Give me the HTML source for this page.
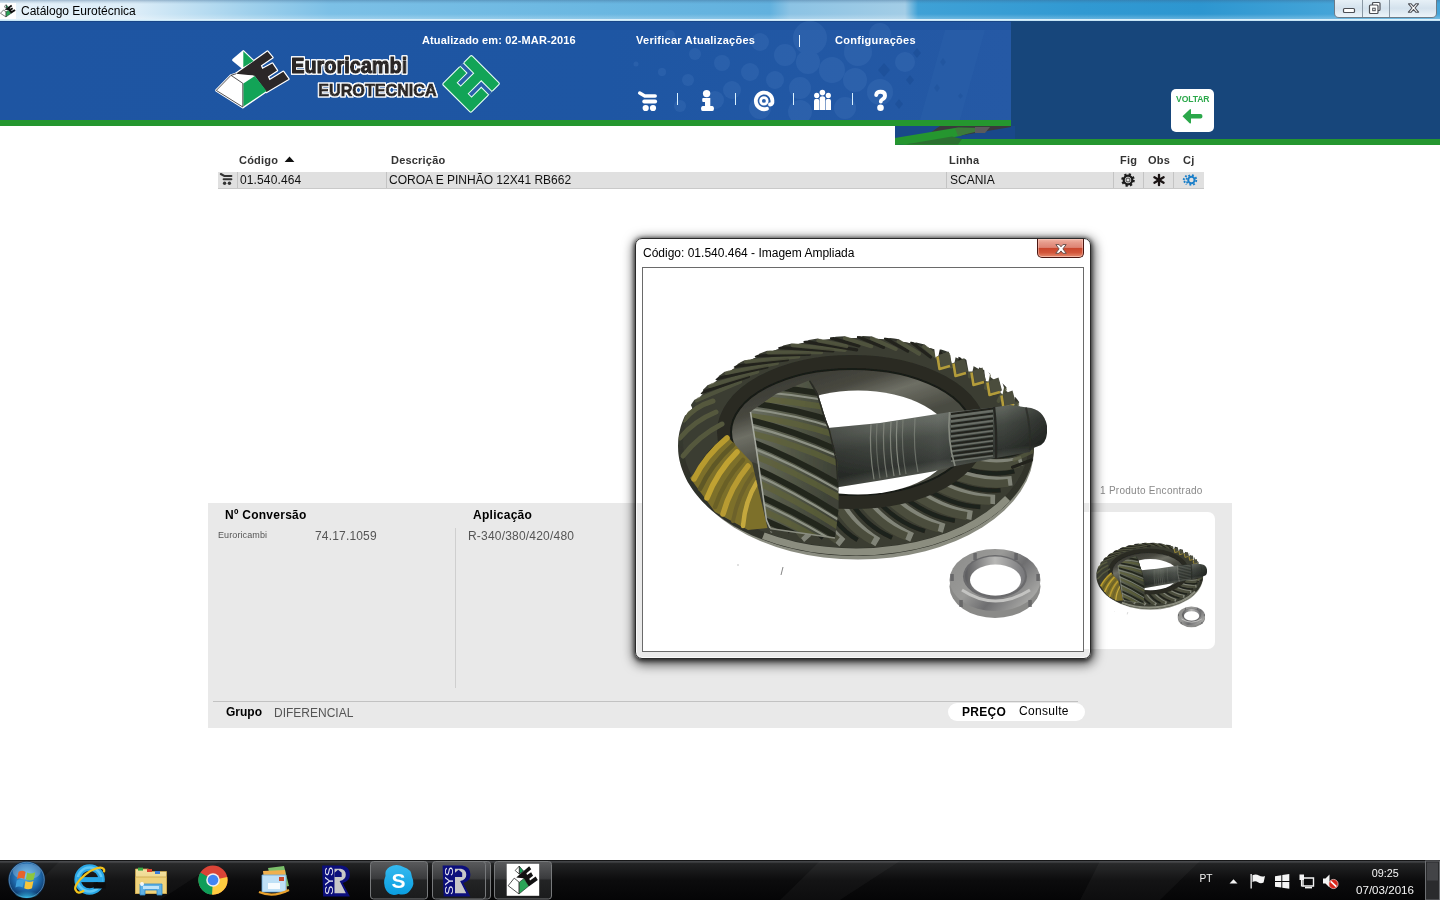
<!DOCTYPE html>
<html lang="pt-BR">
<head>
<meta charset="utf-8">
<title>Catálogo Eurotécnica</title>
<style>
*{box-sizing:border-box;margin:0;padding:0}
html,body{width:1440px;height:900px;overflow:hidden;background:#fff}
body{position:relative;font-family:"Liberation Sans",Arial,sans-serif;font-size:12px;color:#000}
.abs{position:absolute}
svg{will-change:transform}
.t{position:absolute;white-space:nowrap;line-height:1;will-change:transform}
/* title bar */
#titlebar{left:0;top:0;width:1440px;height:21px;background:linear-gradient(180deg,rgba(60,100,140,.4) 0,rgba(60,100,140,.15) 2px,rgba(255,255,255,0) 4px,rgba(255,255,255,0) 14px,rgba(255,255,255,.25) 19px),linear-gradient(90deg,#e6f2fa 0,#dcedf8 135px,#9fd0ec 250px,#7cc0e6 330px,#6ab7e1 600px,#62b1de 770px,#8cc3e4 790px,#a3cde6 905px,#3fa1d6 918px,#3199d2 1080px,#2d96d0 1200px,#44a4d8 1330px,#44a4d8 1440px)}
#titlebar .line{left:0;top:19px;width:1440px;height:2px;background:linear-gradient(#e9f6fd,#b9dff3)}
#title{left:21px;top:5px;font-size:12px;color:#000;font-family:"Liberation Sans","DejaVu Sans",sans-serif}
/* header */
#hdrL{left:0;top:21px;width:1011px;height:99px;background:#1f56a3;overflow:hidden}
#grnL{left:0;top:120px;width:1011px;height:6px;background:#25962f}
#hdrR{left:1011px;top:21px;width:429px;height:118px;background:#17467b}
#hdrR2{left:895px;top:126px;width:116px;height:13px;background:#17467b}
#grnR{left:895px;top:139px;width:545px;height:6px;background:#25962f}
.nav{color:#fff;font-weight:bold;font-size:11px;letter-spacing:.13px}
.sep{background:#fff;width:1px}
/* table */
.th{font-weight:bold;font-size:11px;color:#333;letter-spacing:.2px}
#row{left:218px;top:172px;width:986px;height:17px;background:#e0e0e0;border-bottom:1px solid #c9c9c9}
.td{font-size:12px;color:#111;letter-spacing:.12px}
.cs{background:#c4c4c4;width:1px;top:172px;height:16px}
/* panel */
#panel{left:208px;top:503px;width:1024px;height:225px;background:#e9e9e9}
#thumb{left:1060px;top:512px;width:155px;height:137px;background:#fff;border-radius:7px}
/* dialog */
#dlg{left:635px;top:238px;width:456px;height:421px;background:rgba(255,255,255,.06);border:1px solid #2a2a2a;border-radius:7px;box-shadow:0 0 0 1px rgba(255,255,255,.7) inset,0 1px 4px 1px rgba(0,0,0,.65),1px 3px 11px 3px rgba(0,0,0,.6)}
#dlgin{left:642px;top:267px;width:442px;height:385px;background:#fff;border:1px solid #6a6a6a}
#dtitle{left:643px;top:247px;font-size:12px;color:#000}
#close{left:1037px;top:239px;width:47px;height:19px;border:1px solid #4a1712;border-top:none;border-radius:0 0 5px 5px;background:linear-gradient(#f2b5a6 0,#e69a8a 20%,#dd8373 47%,#c9452c 50%,#d2553a 75%,#df7a5e 92%,#f1b09c 100%);box-shadow:inset 0 0 0 1px rgba(255,210,200,.45)}
/* taskbar */
#taskbar{left:0;top:860px;width:1440px;height:40px;background:#0c0c0d}
</style>
</head>
<body>
<div id="titlebar" class="abs"><div class="abs line"></div></div>

<svg class="abs" style="left:0;top:0" width="1440" height="22" viewBox="0 0 1440 22">
<defs><linearGradient id="wb" x1="0" y1="0" x2="0" y2="1"><stop offset="0" stop-color="#e9f2f8"/><stop offset="0.5" stop-color="#d4e2ed"/><stop offset="1" stop-color="#eef5fa"/></linearGradient>
<linearGradient id="tfade" x1="0" y1="0" x2="1" y2="0"><stop offset="0" stop-color="#fff" stop-opacity="0.85"/><stop offset="0.5" stop-color="#fff" stop-opacity="0.55"/><stop offset="1" stop-color="#fff" stop-opacity="0"/></linearGradient></defs>


<rect x="0" y="3" width="16" height="16" fill="#fff"/>
<g transform="translate(-45 -6.4) scale(0.21 0.218)"><path d="M243.3 51.3 L253.500 61 L243.300 67.300 Z" fill="#12a457" stroke="#111" stroke-width="2"/><path d="M233.300 60 L243.300 51.300 L243.300 67 Z" fill="#fff" stroke="#111" stroke-width="2"/><path d="M236 73.800 L267.500 51.500 L272.500 57.500 L260.800 65.500 L262.300 69 L272.300 63.500 L277 70.500 L267.800 76.500 L269.500 80.200 L283.300 71.800 L288.500 79 L266.500 92 L254.500 75.800 L253 75.600 Z" fill="#111"/><path d="M216.300 90.400 L231 75.300 L242.800 83.300 L242.800 107 Z" fill="#fff" stroke="#111" stroke-width="2.500"/><path d="M243.400 83.500 L254.800 76 L266.500 91 L243.400 106.500 Z" fill="#2aa457" stroke="#111" stroke-width="2"/></g>
<path d="M1334.500 -1 V13 Q1334.500 17.500 1339 17.500 H1432 Q1436.500 17.500 1436.500 13 V-1 Z" fill="url(#wb)" stroke="#6b7b88" stroke-width="1"/>
<path d="M1362.500 0 V17 M1389.500 0 V17" stroke="#8a98a4" stroke-width="1"/>
<rect x="1343.500" y="8.500" width="11" height="4" rx="1" fill="#fff" stroke="#4c4f55" stroke-width="1.200"/>
<rect x="1372.500" y="2.500" width="7.500" height="8" rx="1" fill="#fff" stroke="#4c4f55" stroke-width="1.200"/>
<rect x="1369.500" y="5" width="8.500" height="8.500" rx="1" fill="#fff" stroke="#4c4f55" stroke-width="1.200"/>
<rect x="1372.700" y="8.200" width="2.500" height="2.500" fill="#fff" stroke="#4c4f55" stroke-width="1"/>
<path d="M1408.500 3.800 L1411.200 3.800 L1413.500 6.500 L1415.800 3.800 L1418.500 3.800 L1415 8 L1418.600 12.200 L1415.800 12.200 L1413.500 9.500 L1411.200 12.200 L1408.400 12.200 L1412 8 Z" fill="#fff" stroke="#4c4f55" stroke-width="1.100" stroke-linejoin="round"/>
</svg>
<div id="title" class="t">Catálogo Eurotécnica</div>

<div id="hdrL" class="abs"></div>
<svg class="abs" style="left:0;top:21px" width="1011" height="99" viewBox="0 21 1011 99">
<defs><linearGradient id="hg" x1="0" x2="1" y1="0" y2="0"><stop offset="0" stop-color="#1e55a2"/><stop offset="0.6" stop-color="#1e56a3"/><stop offset="1" stop-color="#2559a5"/></linearGradient></defs>
<rect x="0" y="21" width="1011" height="99" fill="url(#hg)"/>
<rect x="0" y="21" width="1011" height="1" fill="#163f7c" opacity="0.7"/>
<rect x="0" y="22" width="1011" height="8" fill="#1c4f98" opacity="0.4"/>
<g fill="#4a7cc0" opacity="0.25">
<circle cx="810" cy="38" r="17"/><circle cx="785" cy="55" r="11"/><circle cx="760" cy="42" r="9"/><circle cx="808" cy="62" r="12"/><circle cx="832" cy="70" r="13"/><circle cx="858" cy="52" r="14"/><circle cx="880" cy="34" r="11"/><circle cx="750" cy="72" r="9"/><circle cx="775" cy="80" r="9"/><circle cx="800" cy="88" r="11"/><circle cx="855" cy="80" r="12"/><circle cx="880" cy="92" r="13"/><circle cx="722" cy="63" r="8"/><circle cx="695" cy="54" r="6"/><circle cx="732" cy="90" r="9"/><circle cx="688" cy="80" r="6"/><circle cx="662" cy="72" r="4"/><circle cx="636" cy="64" r="2.5"/><circle cx="715" cy="100" r="9"/><circle cx="760" cy="108" r="11"/><circle cx="800" cy="112" r="12"/><circle cx="845" cy="108" r="11"/><circle cx="680" cy="106" r="6"/><circle cx="905" cy="62" r="10"/><circle cx="670" cy="35" r="5"/></g>
<g fill="#1a4c94" opacity="0.55"><path d="M878 70l6 -7 6 7 -6 7z"/><path d="M906 80l4 -5 4 5 -4 5z"/><path d="M913 53l4 -5 4 5 -4 5z"/><path d="M934 88l3 -4 3 4 -3 4z"/><path d="M895 104l4 -5 4 5 -4 5z"/><path d="M940 62l3 -4 3 4 -3 4z"/><path d="M958 96l2.5 -3 2.5 3 -2.5 3z"/></g>
<path d="M945 30 L985 30 L960 120 L920 120 Z" fill="#3166b0" opacity="0.25"/>
</svg>
<div id="grnL" class="abs"></div>
<div id="hdrR" class="abs"></div>
<div id="hdrR2" class="abs"></div>
<div id="grnR" class="abs"></div>
<svg class="abs" style="left:895px;top:126px" width="120" height="19" viewBox="895 126 120 19">
<rect x="895" y="126" width="120" height="19" fill="#19488a"/>
<path d="M940 126 L1011 126 L1011 127 L958 136 L930 133 Z" fill="#3a3a3c"/>
<path d="M895 138 L958 127.5 L982 128 L960 136 L920 143 L895 145 Z" fill="#25962f"/>
<path d="M955 128 L982 128 L975 132 L958 136 Z" fill="#3d7a3a"/>
<path d="M975 127 L990 127 L985 133 L975 133 Z" fill="#5a5a5c"/>
<path d="M895 145 L960 139 L1015 139 L1015 145 Z" fill="#25962f"/>
<path d="M905 144.5 L952 136.5 L962 139 L958 144.5 Z" fill="#2c6f31"/>
</svg>


<svg class="abs" style="left:205px;top:44px" width="310" height="76" viewBox="205 44 310 76">
<g stroke="#fff" stroke-width="2.4" stroke-linejoin="round" fill="#fff">
<path d="M233.3 60 L243.3 51.3 L253 60.5 L242.5 67.5 Z"/>
<path d="M236 73.8 L267.5 51.5 L272.5 57.5 L260.8 65.5 L262.3 69 L272.3 63.5 L277 70.5 L267.8 76.5 L269.5 80.2 L283.3 71.8 L288.5 79 L266.5 92 L254.500 75.800 L253 75.600 Z"/>
<path d="M216.3 90.400 L231 75.300 L236 73.800 L254.800 76 L266.500 91 L242.800 107.300 Z"/>
</g>
<path d="M233.3 60 L243.3 51.3 L243.3 67 Z" fill="#fff"/>
<path d="M243.3 51.3 L253.5 61 L243.3 67.3 Z" fill="#12a457"/>
<path d="M236 73.8 L267.5 51.5 L272.5 57.5 L260.8 65.5 L262.3 69 L272.3 63.5 L277 70.5 L267.8 76.5 L269.5 80.2 L283.3 71.8 L288.5 79 L266.5 92 L254.5 75.8 L253 75.6 Z" fill="#2b2728"/>
<path d="M216.3 90.4 L231 75.3 L242.8 83.3 L242.8 107 Z" fill="#fff"/>
<path d="M234.5 75.6 L253.3 75.6 L243.3 82.5 Z" fill="#fff"/>
<path d="M243.4 83.5 L254.8 76 L266.5 91 L243.4 106.5 Z" fill="#12a457"/>
<path d="M216.3 90.4 L231 75.3 L242.8 83.3 L242.8 107 Z M231 75.3 L236 73.8" fill="none" stroke="#2b2728" stroke-width="0.8"/>
<defs><filter id="wout" x="-5%" y="-20%" width="110%" height="140%"><feMorphology in="SourceAlpha" operator="dilate" radius="1.15" result="d"/><feGaussianBlur in="d" stdDeviation="0.45" result="b"/><feFlood flood-color="#fff" flood-opacity="0.97"/><feComposite in2="b" operator="in" result="o"/><feMerge><feMergeNode in="o"/><feMergeNode in="o"/><feMergeNode in="SourceGraphic"/></feMerge></filter></defs>
<g font-family="'Liberation Sans',sans-serif" font-weight="bold" stroke-linejoin="round" filter="url(#wout)">
<text x="291.2" y="73.4" font-size="22.3" textLength="116" lengthAdjust="spacingAndGlyphs" fill="#2b2728" stroke="#2b2728" stroke-width="1.35">Euroricambi</text>
<text x="318.3" y="95.7" font-size="16.4" textLength="118.3" lengthAdjust="spacingAndGlyphs" fill="#2b2728" stroke="#2b2728" stroke-width="1">EUROTECNICA</text>
</g>
<g transform="translate(442.5 84.2) rotate(-45)">
<!-- local: x = v (up-right), y = u (down-right) -->
<rect x="-0.2" y="-0.2" width="41.2" height="40.4" rx="1.5" fill="#12a457" stroke="#e8fff4" stroke-width="1.1"/>
<path d="M25.2 -0.8 L29.8 -0.8 L29.8 14.2 L11.5 14.2 L11.5 9.4 L25.2 9.4 Z" fill="#2a5faa" stroke="#e8fff4" stroke-width="1"/>
<path d="M25.2 40.8 L29.8 40.8 L29.8 25 L11.5 25 L11.5 29.6 L25.2 29.6 Z" fill="#2a5faa" stroke="#e8fff4" stroke-width="1"/>
<rect x="24.6" y="-2" width="5.8" height="1.8" fill="#1e55a2"/>
<rect x="24.6" y="40.3" width="5.8" height="1.8" fill="#1e55a2"/>
</g>
</svg>
<div class="t nav" style="left:422px;top:35px">Atualizado em: 02-MAR-2016</div>
<div class="t nav" style="left:636px;top:35px;letter-spacing:.27px">Verificar Atualizações</div>
<div class="t nav" style="left:835px;top:35px;letter-spacing:.3px">Configurações</div>


<svg class="abs" style="left:630px;top:30px" width="270" height="90" viewBox="630 30 270 90">
<g fill="#fff" stroke="none">
<rect x="799" y="35" width="1" height="12" fill="#e6f4ff"/>
<rect x="677" y="93" width="1" height="12" fill="#d8f0ff"/><rect x="735" y="93" width="1" height="12" fill="#d8f0ff"/><rect x="793" y="93" width="1" height="12" fill="#d8f0ff"/><rect x="852" y="93" width="1" height="12" fill="#d8f0ff"/>
<!-- cart -->
<path d="M639.7 93 L644.8 95.900 L655.200 95.900" fill="none" stroke="#fff" stroke-width="3.5" stroke-linecap="round" stroke-linejoin="round"/>
<path d="M644.2 101.500 L655.200 101.500" fill="none" stroke="#fff" stroke-width="3.8" stroke-linecap="round"/>
<circle cx="645.7" cy="108" r="3.1"/><circle cx="653" cy="108" r="3.1"/>
<!-- info -->
<circle cx="706.6" cy="93.6" r="3.7"/>
<path d="M702.6 97.9 H710.3 V106 H712.4 Q714 106 714 108.5 Q714 111 712.4 111 H702.6 Q701 111 701 108.5 Q701 106 702.6 106 H705 V102 H702.6 Q701.6 100 702.6 97.9 Z"/>
<!-- at -->
<path d="M767 108.700 A8.3 8.3 0 1 1 772.4 100.600 Q772.800 104.300 770 104.500" fill="none" stroke="#fff" stroke-width="3.8" stroke-linecap="round"/>
<circle cx="763.9" cy="100.9" r="3.3" fill="none" stroke="#fff" stroke-width="2.7"/>
<!-- people -->
<circle cx="816.7" cy="95.4" r="2.6"/><circle cx="822.4" cy="92.6" r="2.8"/><circle cx="828.3" cy="95.4" r="2.6"/>
<path d="M814 110 V100.8 Q814 98.8 816.7 98.8 Q819.3 98.8 819.3 100.8 V110 Z"/>
<path d="M819.7 110 V98.2 Q819.7 96.2 822.4 96.2 Q825.2 96.2 825.2 98.2 V110 Z"/>
<path d="M825.7 110 V100.8 Q825.7 98.8 828.3 98.8 Q831 98.8 831 100.8 V110 Z"/>
<!-- question -->
<path d="M876.2 95 Q876.6 91.8 880.6 91.8 Q885 91.8 885 95.6 Q885 98 882.4 99.4 Q880.8 100.4 880.8 101.6" fill="none" stroke="#fff" stroke-width="3.9" stroke-linecap="round"/>
<circle cx="880.5" cy="107.7" r="3.3"/>
</g></svg>

<div class="abs" style="left:1171px;top:89px;width:43px;height:43px;background:#fff;border-radius:5px"></div>
<div class="t" style="left:1175.5px;top:95px;font-size:8.6px;font-weight:bold;color:#2ba84a;letter-spacing:-.1px">VOLTAR</div>
<svg class="abs" style="left:1171px;top:89px" width="43" height="43" viewBox="0 0 43 43"><path d="M11.5 27.3 L18.6 20.4 Q20 19.6 20 21 V25 H29.5 Q31.5 25 31.5 27.3 Q31.5 29.6 29.5 29.6 H20 V33.4 Q20 35 18.6 34.2 Z" fill="#2ba84a"/></svg>
<div class="t th" style="left:239px;top:155px">Código</div>
<div class="t th" style="left:391px;top:155px">Descrição</div>
<div class="t th" style="left:949px;top:155px">Linha</div>
<div class="t th" style="left:1120px;top:155px">Fig</div>
<div class="t th" style="left:1148px;top:155px">Obs</div>
<div class="t th" style="left:1183px;top:155px">Cj</div>
<div id="row" class="abs"></div>
<div class="abs cs" style="left:237px"></div><div class="abs cs" style="left:386px"></div><div class="abs cs" style="left:946px"></div><div class="abs cs" style="left:1113px"></div><div class="abs cs" style="left:1143px"></div><div class="abs cs" style="left:1173px"></div>
<svg class="abs" style="left:218px;top:150px" width="990" height="40" viewBox="218 150 990 40">
<path d="M284.6 162 L289.5 156.6 L294.4 162 Z" fill="#111"/>
<g stroke="#333" fill="none" stroke-width="2" stroke-linecap="round"><path d="M220.8 174 L224.3 175.9 L231.4 175.9"/><path d="M223.6 179.3 L231.4 179.3"/></g>
<circle cx="224.6" cy="183.3" r="1.7" fill="#333"/><circle cx="229.4" cy="183.3" r="1.7" fill="#333"/>
<!-- gear -->
<g transform="translate(1128 180)"><circle r="4.3" fill="none" stroke="#1c1c1c" stroke-width="2.2"/><circle r="5.6" fill="none" stroke="#1c1c1c" stroke-width="2.4" stroke-dasharray="2.2 2.2"/><circle r="2" fill="none" stroke="#1c1c1c" stroke-width="0.8"/></g>
<!-- asterisk -->
<g transform="translate(1159 180)" stroke="#1a1414" stroke-width="2.3" stroke-linecap="round"><path d="M0 -5.2V5.2"/><path d="M-4.6 -2.7L4.6 2.7"/><path d="M-4.6 2.7L4.6 -2.7"/></g>
<!-- blue gears -->
<g fill="none" stroke="#1b7fc9"><circle cx="1191.4" cy="180" r="3.2" stroke-width="2"/><circle cx="1191.4" cy="180" r="4.9" stroke-width="1.8" stroke-dasharray="1.9 1.95"/><path d="M1186.5 175.5 L1183.2 180 L1186.5 184.5" stroke-width="1.9" stroke-dasharray="1.9 1.6"/></g>
</svg>
<div class="t td" style="left:240px;top:174px">01.540.464</div>
<div class="t td" style="left:389px;top:174px;letter-spacing:0">COROA E PINHÃO 12X41 RB662</div>
<div class="t td" style="left:950px;top:174px;letter-spacing:0">SCANIA</div>

<div id="panel" class="abs"></div>
<div id="thumb" class="abs"></div>
<div class="abs" style="left:455px;top:528px;width:1px;height:160px;background:#cfcfcf"></div>
<div class="abs" style="left:213px;top:701px;width:865px;height:1px;background:#c2c2c2"></div>
<div class="abs" style="left:948px;top:703px;width:137px;height:18px;background:#fff;border-radius:9px"></div>
<div class="t" style="left:962px;top:706px;font-size:12px;font-weight:bold;letter-spacing:.3px">PREÇO</div>
<div class="t" style="left:1019px;top:705px;font-size:12px;letter-spacing:.3px">Consulte</div>
<div class="t" style="left:225px;top:509px;font-weight:bold;font-size:12px;letter-spacing:.27px">Nº Conversão</div>
<div class="t" style="left:473px;top:509px;font-weight:bold;font-size:12px;letter-spacing:.27px">Aplicação</div>
<div class="t" style="left:218px;top:531px;font-size:9px;color:#555;letter-spacing:.1px">Euroricambi</div>
<div class="t" style="left:315px;top:530px;font-size:12px;color:#555;letter-spacing:.17px">74.17.1059</div>
<div class="t" style="left:468px;top:530px;font-size:12px;color:#555;letter-spacing:.2px">R-340/380/420/480</div>
<div class="t" style="left:226px;top:706px;font-weight:bold;font-size:12px">Grupo</div>
<div class="t" style="left:274px;top:707px;font-size:12px;color:#555">DIFERENCIAL</div>
<div class="t" style="left:1100px;top:485.5px;font-size:10px;color:#888;letter-spacing:.27px">1 Produto Encontrado</div>

<div id="dlg" class="abs"></div>
<div id="dlgin" class="abs"></div>
<div id="dtitle" class="t">Código: 01.540.464 - Imagem Ampliada</div>
<div id="close" class="abs"></div>
<svg class="abs" style="left:1054px;top:242.500px" width="14" height="12" viewBox="0 0 14 12"><path d="M1.8 1.600 L5.2 1.600 L7 3.800 L8.800 1.600 L12.200 1.600 L8.900 5.900 L12.300 10.300 L8.900 10.300 L7 7.900 L5.100 10.300 L1.700 10.300 L5.100 5.900 Z" fill="#fff" stroke="#6a504c" stroke-width="1" stroke-linejoin="round"/></svg>
<svg class="abs" style="left:643px;top:268px" width="440" height="383" viewBox="643 268 440 383"><g id="gearimg">
<defs>
<linearGradient id="gRing" x1="0" y1="0" x2="1" y2="1"><stop offset="0" stop-color="#45483a"/><stop offset="0.35" stop-color="#2e3029"/><stop offset="1" stop-color="#33352c"/></linearGradient>
<linearGradient id="gShaft" gradientUnits="userSpaceOnUse" x1="930" y1="412" x2="940" y2="472"><stop offset="0" stop-color="#666b64"/><stop offset="0.15" stop-color="#5d625b"/><stop offset="0.4" stop-color="#434842"/><stop offset="0.8" stop-color="#2f332f"/><stop offset="1" stop-color="#50544c"/></linearGradient>
<linearGradient id="gShaftL" gradientUnits="userSpaceOnUse" x1="830" y1="0" x2="1047" y2="0"><stop offset="0" stop-color="#000" stop-opacity="0.25"/><stop offset="0.25" stop-color="#000" stop-opacity="0"/><stop offset="0.5" stop-color="#fff" stop-opacity="0.06"/><stop offset="0.8" stop-color="#000" stop-opacity="0.0"/><stop offset="1" stop-color="#000" stop-opacity="0.3"/></linearGradient>
<linearGradient id="gPin" x1="0" y1="0" x2="1" y2="0.2"><stop offset="0" stop-color="#6c7064"/><stop offset="0.5" stop-color="#555948"/><stop offset="1" stop-color="#3f4337"/></linearGradient>
<linearGradient id="gNut" x1="0" y1="0" x2="1" y2="0.6"><stop offset="0" stop-color="#8a8a88"/><stop offset="0.45" stop-color="#9a9a98"/><stop offset="0.7" stop-color="#6e6e70"/><stop offset="1" stop-color="#a4a4a2"/></linearGradient>
<linearGradient id="gNutIn" x1="0" y1="0" x2="1" y2="0"><stop offset="0" stop-color="#5c5c5e"/><stop offset="0.5" stop-color="#b8b8b6"/><stop offset="1" stop-color="#77777a"/></linearGradient>
<linearGradient id="gBore" x1="0" y1="0" x2="0.6" y2="1"><stop offset="0" stop-color="#2f302a"/><stop offset="0.3" stop-color="#47473f"/><stop offset="0.42" stop-color="#6e6f65"/><stop offset="0.6" stop-color="#4a4b42"/><stop offset="1" stop-color="#4a4b42"/></linearGradient>
<clipPath id="cOut"><ellipse cx="856" cy="448" rx="178" ry="112"/></clipPath>
<clipPath id="cPin"><path d="M750,412 L776,394 L810,380 L814,386 L818,394 L826,420 L830,430 L837,460 L838.5,482 L838.5,510 L835,538 L770,528.5 L766,520 L756,450 Z"/></clipPath>
<filter id="soft" x="-5%" y="-5%" width="110%" height="110%"><feGaussianBlur stdDeviation="0.55"/></filter>
<filter id="soft2" x="-5%" y="-5%" width="110%" height="110%"><feGaussianBlur stdDeviation="1.6"/></filter>
</defs>
<g filter="url(#soft)">
<ellipse cx="858" cy="449.5" rx="176" ry="110" fill="#8a8c80"/>
<polygon fill="url(#gRing)" points="1034.0,446.0 1033.9,448.8 1033.8,451.6 1033.5,454.4 1033.1,457.2 1032.6,460.0 1031.9,462.8 1031.2,465.6 1030.3,468.3 1029.3,471.1 1028.2,473.8 1027.0,476.5 1025.7,479.2 1024.3,481.9 1022.7,484.5 1021.1,487.1 1019.3,489.7 1017.5,492.3 1015.5,494.8 1013.4,497.3 1011.3,499.8 1009.0,502.2 1006.6,504.6 1004.2,507.0 1001.6,509.3 998.9,511.6 996.2,513.8 993.3,516.0 990.4,518.1 987.4,520.2 984.3,522.3 981.1,524.3 977.8,526.2 974.4,528.1 971.0,530.0 967.5,531.8 963.9,533.5 960.3,535.2 956.5,536.8 952.8,538.3 948.9,539.8 945.0,541.3 941.0,542.6 937.0,543.9 932.9,545.2 928.8,546.4 924.6,547.5 920.4,548.5 916.2,549.5 911.9,550.4 907.5,551.3 903.2,552.1 898.8,552.8 894.3,553.4 889.9,554.0 885.4,554.5 880.9,554.9 876.4,555.3 871.9,555.6 867.4,555.8 862.8,555.9 858.3,556.0 853.7,556.0 849.2,555.9 844.6,555.8 840.1,555.6 835.6,555.3 831.1,554.9 826.6,554.5 822.1,554.0 817.7,553.4 813.2,552.8 808.8,552.1 804.5,551.3 800.1,550.4 795.8,549.5 791.6,548.5 787.4,547.5 783.2,546.4 779.1,545.2 775.0,543.9 771.0,542.6 767.0,541.3 763.1,539.8 759.2,538.3 755.5,536.8 751.7,535.2 748.1,533.5 744.5,531.8 741.0,530.0 737.6,528.1 734.2,526.2 730.9,524.3 727.7,522.3 724.6,520.2 721.6,518.1 718.7,516.0 715.8,513.8 713.1,511.6 710.4,509.3 707.8,507.0 705.4,504.6 703.0,502.2 700.7,499.8 698.6,497.3 696.5,494.8 694.5,492.3 692.7,489.7 690.9,487.1 689.3,484.5 687.7,481.9 686.3,479.2 685.0,476.5 683.8,473.8 682.7,471.1 681.7,468.3 680.8,465.6 680.1,462.8 679.4,460.0 678.9,457.2 678.5,454.4 678.2,451.6 678.1,448.8 678.0,446.0 678.1,443.2 678.2,440.4 678.5,437.6 678.9,434.8 679.4,432.0 680.1,429.2 680.8,426.4 681.7,423.7 682.7,420.9 683.8,418.2 685.0,415.5 689.4,413.4 690.8,410.8 692.3,408.2 690.9,404.9 692.7,402.3 694.5,399.7 699.4,398.1 701.4,395.6 703.5,393.2 703.0,389.8 705.4,387.4 707.8,385.0 713.0,383.9 715.6,381.6 718.4,379.4 718.7,376.0 721.6,373.9 724.6,371.8 730.1,371.1 733.2,369.1 736.4,367.2 737.6,363.9 741.0,362.0 744.5,360.2 750.0,360.1 753.6,358.4 757.3,356.9 759.2,353.7 763.1,352.2 767.0,350.7 772.5,351.1 776.4,349.8 780.4,348.6 783.2,345.6 787.4,344.5 791.6,343.5 796.9,344.3 801.1,343.4 805.4,342.6 808.8,339.9 813.2,339.2 817.7,338.6 822.7,340.0 827.1,339.5 831.5,339.0 835.6,336.7 840.1,336.4 844.6,336.2 849.3,338.1 853.8,338.0 858.2,338.0 862.8,336.1 867.4,336.2 871.9,336.4 876.0,338.7 880.5,339.0 884.9,339.5 889.9,338.0 894.3,338.6 898.8,339.2 902.3,341.8 906.6,342.6 910.9,343.4 916.2,342.5 920.4,343.5 924.6,344.5 927.5,347.4 931.6,348.6 935.6,349.8 941.0,349.4 945.0,350.7 948.9,352.2 949.4,356.9 953.0,358.4 956.6,360.0 963.9,358.5 967.5,360.2 971.0,362.0 970.3,366.8 973.5,368.6 976.7,370.5 984.3,369.7 987.4,371.8 990.4,373.9 988.5,378.5 991.3,380.6 993.9,382.7 1001.6,382.7 1004.2,385.0 1006.6,387.4 1003.6,391.8 1005.8,394.1 1007.9,396.5 1015.5,397.2 1017.5,399.7 1019.3,402.3 1015.3,406.3 1016.9,408.8 1018.4,411.4 1025.7,412.8 1027.0,415.5 1028.2,418.2 1029.3,420.9 1030.3,423.7 1031.2,426.4 1031.9,429.2 1032.6,432.0 1033.1,434.8 1033.5,437.6 1033.8,440.4 1033.9,443.2"/>
<g clip-path="url(#cOut)">
<ellipse cx="856" cy="443" rx="173" ry="105" fill="#3b3d32"/>
<path d="M971.6,447.0 Q1004.8,450.1 1024.9,439.5" stroke="#8a8c80" stroke-width="9.5" fill="none" opacity="0.9"/>
<path d="M970.6,449.0 Q1004.1,452.8 1023.0,442.7" stroke="#4c4e3c" stroke-width="8" fill="none"/>
<path d="M967.3,454.4 Q1001.4,460.3 1021.3,451.3" stroke="#1f201a" stroke-width="4.5" fill="none"/>
<path d="M962.9,459.7 Q997.5,467.8 1022.1,460.6" stroke="#8a8c80" stroke-width="9.5" fill="none" opacity="0.9"/>
<path d="M961.2,461.5 Q995.8,470.3 1019.1,463.3" stroke="#4c4e3c" stroke-width="8" fill="none"/>
<path d="M955.8,466.3 Q990.5,477.3 1014.4,471.4" stroke="#1f201a" stroke-width="4.5" fill="none"/>
<path d="M949.5,471.0 Q983.9,484.2 1012.0,480.8" stroke="#8a8c80" stroke-width="9.5" fill="none" opacity="0.9"/>
<path d="M947.0,472.6 Q981.3,486.5 1008.1,482.9" stroke="#4c4e3c" stroke-width="8" fill="none"/>
<path d="M939.8,476.8 Q973.5,492.7 1000.6,490.2" stroke="#1f201a" stroke-width="4.5" fill="none"/>
<path d="M931.7,480.7 Q964.6,498.7 995.1,499.4" stroke="#8a8c80" stroke-width="9.5" fill="none" opacity="0.9"/>
<path d="M928.7,482.0 Q961.3,500.6 990.4,500.7" stroke="#4c4e3c" stroke-width="8" fill="none"/>
<path d="M920.0,485.3 Q951.4,505.8 980.4,506.9" stroke="#1f201a" stroke-width="4.5" fill="none"/>
<path d="M910.5,488.3 Q940.5,510.5 972.1,515.4" stroke="#8a8c80" stroke-width="9.5" fill="none" opacity="0.9"/>
<path d="M907.1,489.2 Q936.6,512.0 966.9,516.0" stroke="#4c4e3c" stroke-width="8" fill="none"/>
<path d="M897.2,491.5 Q925.0,515.9 954.9,520.7" stroke="#1f201a" stroke-width="4.5" fill="none"/>
<path d="M886.7,493.4 Q912.7,519.3 944.1,528.2" stroke="#8a8c80" stroke-width="9.5" fill="none" opacity="0.9"/>
<path d="M883.0,493.9 Q908.2,520.3 938.5,528.1" stroke="#4c4e3c" stroke-width="8" fill="none"/>
<path d="M872.4,495.1 Q895.5,522.7 925.0,531.1" stroke="#1f201a" stroke-width="4.5" fill="none"/>
<path d="M861.4,495.8 Q882.2,524.5 912.1,537.3" stroke="#8a8c80" stroke-width="9.5" fill="none" opacity="0.9"/>
<path d="M857.6,495.9 Q877.5,525.0 906.5,536.4" stroke="#4c4e3c" stroke-width="8" fill="none"/>
<path d="M846.8,495.9 Q864.2,525.8 892.1,537.7" stroke="#1f201a" stroke-width="4.5" fill="none"/>
<path d="M835.7,495.4 Q850.6,526.0 877.8,542.2" stroke="#8a8c80" stroke-width="9.5" fill="none" opacity="0.9"/>
<path d="M831.9,495.1 Q845.8,525.9 872.3,540.5" stroke="#4c4e3c" stroke-width="8" fill="none"/>
<path d="M821.3,494.0 Q832.5,525.1 857.6,540.0" stroke="#1f201a" stroke-width="4.5" fill="none"/>
<path d="M810.7,492.3 Q819.0,523.7 842.4,542.7" stroke="#8a8c80" stroke-width="9.5" fill="none" opacity="0.9"/>
<path d="M807.1,491.6 Q814.4,523.0 837.4,540.4" stroke="#4c4e3c" stroke-width="8" fill="none"/>
<path d="M797.2,489.3 Q801.7,520.7 823.1,538.1" stroke="#1f201a" stroke-width="4.5" fill="none"/>
<path d="M787.5,486.5 Q789.0,517.7 807.7,538.8" stroke="#8a8c80" stroke-width="9.5" fill="none" opacity="0.9"/>
<path d="M784.3,485.4 Q784.8,516.4 803.3,535.9" stroke="#4c4e3c" stroke-width="8" fill="none"/>
<path d="M775.5,482.1 Q773.1,512.7 790.0,531.9" stroke="#1f201a" stroke-width="4.5" fill="none"/>
<path d="M767.2,478.3 Q761.9,508.2 775.1,530.7" stroke="#8a8c80" stroke-width="9.5" fill="none" opacity="0.9"/>
<path d="M764.4,476.9 Q758.1,506.5 771.5,527.4" stroke="#4c4e3c" stroke-width="8" fill="none"/>
<path d="M757.2,472.8 Q748.1,501.4 759.7,521.8" stroke="#1f201a" stroke-width="4.5" fill="none"/>
<path d="M750.5,468.2 Q738.8,495.7 746.0,518.7" stroke="#8a8c80" stroke-width="9.5" fill="none" opacity="0.9"/>
<path d="M748.4,466.5 Q735.7,493.6 743.4,515.1" stroke="#4c4e3c" stroke-width="8" fill="none"/>
<path d="M743.0,461.6 Q727.8,487.5 733.7,508.3" stroke="#1f201a" stroke-width="4.5" fill="none"/>
<path d="M738.3,456.4 Q720.7,480.8 721.7,503.3" stroke="#8a8c80" stroke-width="9.5" fill="none" opacity="0.9"/>
<path d="M736.9,454.5 Q718.4,478.4 720.2,499.6" stroke="#4c4e3c" stroke-width="8" fill="none"/>
<path d="M733.5,449.2 Q712.9,471.4 713.1,491.8" stroke="#1f201a" stroke-width="4.5" fill="none"/>
<path d="M731.0,443.6 Q708.4,464.0 703.3,485.3" stroke="#8a8c80" stroke-width="9.5" fill="none" opacity="0.9"/>
<path d="M730.4,441.6 Q707.1,461.4 703.0,481.6" stroke="#4c4e3c" stroke-width="8" fill="none"/>
<path d="M729.2,436.0 Q704.2,453.9 698.6,473.2" stroke="#1f201a" stroke-width="4.5" fill="none"/>
<path d="M1031.8,451.7 L1014.6,459.8" stroke="#55583f" stroke-width="4" fill="none" stroke-linecap="round" opacity="0.75"/>
<path d="M1031.5,460.0 L1012.5,467.3" stroke="#22231d" stroke-width="3.2" fill="none" stroke-linecap="round"/>
<path d="M696.4,400.4 L740.2,381.7" stroke="#585b43" stroke-width="4" fill="none" stroke-linecap="round" opacity="0.75"/>
<path d="M701.7,392.6 L748.5,376.4" stroke="#22231d" stroke-width="3.2" fill="none" stroke-linecap="round"/>
<path d="M709.6,386.0 L757.4,371.5" stroke="#585b43" stroke-width="4" fill="none" stroke-linecap="round" opacity="0.75"/>
<path d="M716.8,378.7 L767.0,367.0" stroke="#22231d" stroke-width="3.2" fill="none" stroke-linecap="round"/>
<path d="M726.3,373.0 L777.0,363.1" stroke="#585b43" stroke-width="4" fill="none" stroke-linecap="round" opacity="0.75"/>
<path d="M735.1,366.4 L787.5,359.6" stroke="#22231d" stroke-width="3.2" fill="none" stroke-linecap="round"/>
<path d="M745.9,361.7 L798.4,356.6" stroke="#585b43" stroke-width="4" fill="none" stroke-linecap="round" opacity="0.75"/>
<path d="M756.2,356.0 L809.7,354.1" stroke="#22231d" stroke-width="3.2" fill="none" stroke-linecap="round"/>
<path d="M768.2,352.4 L821.2,352.2" stroke="#585b43" stroke-width="4" fill="none" stroke-linecap="round" opacity="0.75"/>
<path d="M779.7,347.6 L832.9,350.8" stroke="#22231d" stroke-width="3.2" fill="none" stroke-linecap="round"/>
<path d="M792.5,345.3 L844.7,350.0" stroke="#585b43" stroke-width="4" fill="none" stroke-linecap="round" opacity="0.75"/>
<path d="M805.0,341.6 L856.7,349.8" stroke="#22231d" stroke-width="3.2" fill="none" stroke-linecap="round"/>
<path d="M818.3,340.5 L846.5,346.1" stroke="#585b43" stroke-width="4" fill="none" stroke-linecap="round" opacity="0.75"/>
<path d="M831.5,338.1 L858.9,345.9" stroke="#22231d" stroke-width="3.2" fill="none" stroke-linecap="round"/>
<path d="M845.0,338.2 L871.3,346.3" stroke="#585b43" stroke-width="4" fill="none" stroke-linecap="round" opacity="0.75"/>
<path d="M858.5,337.0 L883.6,347.4" stroke="#22231d" stroke-width="3.2" fill="none" stroke-linecap="round"/>
<path d="M871.9,338.4 L895.7,349.0" stroke="#585b43" stroke-width="4" fill="none" stroke-linecap="round" opacity="0.75"/>
<path d="M885.5,338.5 L907.7,351.1" stroke="#22231d" stroke-width="3.2" fill="none" stroke-linecap="round"/>
<path d="M898.5,341.2 L919.2,353.8" stroke="#585b43" stroke-width="4" fill="none" stroke-linecap="round" opacity="0.75"/>
<path d="M911.8,342.6 L930.5,357.1" stroke="#22231d" stroke-width="3.2" fill="none" stroke-linecap="round"/>
<path d="M924.1,346.4 L941.3,360.9" stroke="#585b43" stroke-width="4" fill="none" stroke-linecap="round" opacity="0.75"/>
<path d="M936.8,349.0 L951.6,365.2" stroke="#22231d" stroke-width="3.2" fill="none" stroke-linecap="round"/>
<path d="M948.1,354.0 L951.4,366.5" stroke="#55583f" stroke-width="4" fill="none" stroke-linecap="round" opacity="0.75"/>
<path d="M959.9,357.7 L961.0,371.2" stroke="#22231d" stroke-width="3.2" fill="none" stroke-linecap="round"/>
<path d="M969.9,363.7 L969.9,376.4" stroke="#55583f" stroke-width="4" fill="none" stroke-linecap="round" opacity="0.75"/>
<path d="M980.5,368.5 L978.2,382.0" stroke="#22231d" stroke-width="3.2" fill="none" stroke-linecap="round"/>
<path d="M989.0,375.3 L985.8,387.9" stroke="#55583f" stroke-width="4" fill="none" stroke-linecap="round" opacity="0.75"/>
<path d="M998.3,381.2 L992.6,394.3" stroke="#22231d" stroke-width="3.2" fill="none" stroke-linecap="round"/>
<path d="M1005.1,388.6 L998.6,400.9" stroke="#55583f" stroke-width="4" fill="none" stroke-linecap="round" opacity="0.75"/>
<path d="M1012.7,395.3 L1003.8,407.8" stroke="#22231d" stroke-width="3.2" fill="none" stroke-linecap="round"/>
<path d="M1017.6,403.2 L1008.1,414.8" stroke="#55583f" stroke-width="4" fill="none" stroke-linecap="round" opacity="0.75"/>
<path d="M1023.4,410.6 L1011.5,422.1" stroke="#22231d" stroke-width="3.2" fill="none" stroke-linecap="round"/>
<path d="M1026.3,418.8 L1014.0,429.6" stroke="#55583f" stroke-width="4" fill="none" stroke-linecap="round" opacity="0.75"/>
<path d="M1030.2,426.8 L1015.6,437.1" stroke="#22231d" stroke-width="3.2" fill="none" stroke-linecap="round"/>
<path d="M1031.1,435.1 L1016.2,444.7" stroke="#55583f" stroke-width="4" fill="none" stroke-linecap="round" opacity="0.75"/>
<path d="M1032.9,443.4 L1015.9,452.2" stroke="#22231d" stroke-width="3.2" fill="none" stroke-linecap="round"/>
<path d="M1007.6,498.5 A175 107 0 0 1 763.3,535.7" stroke="#8b8d7f" stroke-width="7" fill="none"/>
</g>
<ellipse cx="852" cy="432" rx="128" ry="70" fill="none" stroke="#2a2b24" stroke-width="14"/>
<ellipse cx="852" cy="432" rx="121" ry="63" fill="url(#gBore)" stroke="#191a15" stroke-width="2"/>
<ellipse cx="858" cy="442.5" rx="94" ry="52" fill="#fff"/>
<g clip-path="url(#cOut)">
<path d="M727,436 L753,464 L768,528 L748,530 L715,512 L690,478 Z" fill="#7d6f2a"/>
<path d="M727 438 Q705.5 455.5 694 479" stroke="#b89b2e" stroke-width="5.5" fill="none" stroke-linecap="round"/>
<path d="M737 452 Q717 472 707 498" stroke="#c0a230" stroke-width="5.5" fill="none" stroke-linecap="round"/>
<path d="M748 466 Q730.5 487 723 514" stroke="#b89b30" stroke-width="5.5" fill="none" stroke-linecap="round"/>
<path d="M757 482 Q745 501 743 526" stroke="#c4a83e" stroke-width="4.5" fill="none" stroke-linecap="round"/>
<path d="M733 445 Q711.5 464 700 489" stroke="#5f5826" stroke-width="4.5" fill="none" stroke-linecap="round"/>
<path d="M743 460 Q724 480.5 715 507" stroke="#6b6128" stroke-width="4.5" fill="none" stroke-linecap="round"/>
<path d="M753 474 Q738 494.5 733 521" stroke="#6d622a" stroke-width="4" fill="none" stroke-linecap="round"/>
<path d="M722 424 Q698.5 436 683 456" stroke="#55583e" stroke-width="5" fill="none" stroke-linecap="round"/>
<path d="M716 412 Q694 421 680 438" stroke="#55583e" stroke-width="5" fill="none" stroke-linecap="round"/>
<path d="M713 401 Q694.5 406.5 684 420" stroke="#55583e" stroke-width="5" fill="none" stroke-linecap="round"/>
<path d="M752,462 L768,530 L790,540 L775,470 Z" fill="#3a3c33"/>
</g>
<path d="M933.5 343.5 L940 348.5 L938.5 355.5 L935.5 357.5 Z" fill="#fff"/>
<path d="M949.5 348.5 L956 355.5 L954.5 362.5 L951.5 363.5 Z" fill="#fff"/>
<path d="M965.5 355.5 L974 364.5 L972.5 371.5 L968.5 371.5 Z" fill="#fff"/>
<path d="M983.5 364.5 L990 374.5 L988.5 381.5 L985.5 381 Z" fill="#fff"/>
<path d="M999.5 374.5 L1004 387.5 L1002.5 394.5 L1000.5 392.5 Z" fill="#fff"/>
<path d="M1013.5 387.5 L1015 401 L1013.5 408 L1013 405.75 Z" fill="#fff"/>
<path d="M939 355 L948.5 351.5 L952 364.5 L941 368.5 Z" fill="#4b4d3d"/>
<path d="M937.5 356.5 L939.5 369 L950 366" stroke="#b39c3a" stroke-width="2.6" fill="none" stroke-linejoin="round"/>
<path d="M955 362 L964.5 358.5 L968 371.5 L957 375.5 Z" fill="#4b4d3d"/>
<path d="M953.5 363.5 L955.5 376 L966 373" stroke="#b39c3a" stroke-width="2.6" fill="none" stroke-linejoin="round"/>
<path d="M973 371 L982.5 367.5 L986 380.5 L975 384.5 Z" fill="#4b4d3d"/>
<path d="M971.5 372.5 L973.5 385 L984 382" stroke="#b39c3a" stroke-width="2.6" fill="none" stroke-linejoin="round"/>
<path d="M989 381 L998.5 377.5 L1002 390.5 L991 394.5 Z" fill="#4b4d3d"/>
<path d="M987.5 382.5 L989.5 395 L1000 392" stroke="#b39c3a" stroke-width="2.6" fill="none" stroke-linejoin="round"/>
<path d="M1003 394 L1012.5 390.5 L1016 403.5 L1005 407.5 Z" fill="#4b4d3d"/>
<path d="M1001.5 395.5 L1003.5 408 L1014 405" stroke="#b39c3a" stroke-width="2.6" fill="none" stroke-linejoin="round"/>
<path d="M828,428 L880,423 L947,412.500 L993,407.500 L1010,405 L1027,407.5 Q1044,409 1047,426 Q1048,441 1041,445 L1032,448.500 L1030,452 L993,458.500 L953,466.500 L933,471.500 L880,480.500 L836,487.500 Z" fill="url(#gShaft)"/>
<path d="M828,428 L880,423 L947,412.500 L993,407.500 L1010,405 L1027,407.5 Q1044,409 1047,426 Q1048,441 1041,445 L1032,448.500 L1030,452 L993,458.500 L953,466.500 L933,471.500 L880,480.500 L836,487.500 Z" fill="url(#gShaftL)"/>
<path d="M951,414.0 L993,408.5" stroke="#20231e" stroke-width="2.2"/>
<path d="M951,416.3 L993,410.8" stroke="#6c7068" stroke-width="1.4"/>
<path d="M951,419.0 L993,413.5" stroke="#20231e" stroke-width="2.2"/>
<path d="M951,421.3 L993,415.8" stroke="#6c7068" stroke-width="1.4"/>
<path d="M951,424.0 L993,418.5" stroke="#20231e" stroke-width="2.2"/>
<path d="M951,426.3 L993,420.8" stroke="#6c7068" stroke-width="1.4"/>
<path d="M951,429.0 L993,423.5" stroke="#20231e" stroke-width="2.2"/>
<path d="M951,431.3 L993,425.8" stroke="#6c7068" stroke-width="1.4"/>
<path d="M951,434.0 L993,428.5" stroke="#20231e" stroke-width="2.2"/>
<path d="M951,436.3 L993,430.8" stroke="#6c7068" stroke-width="1.4"/>
<path d="M951,439.0 L993,433.5" stroke="#20231e" stroke-width="2.2"/>
<path d="M951,441.3 L993,435.8" stroke="#6c7068" stroke-width="1.4"/>
<path d="M951,444.0 L993,438.5" stroke="#20231e" stroke-width="2.2"/>
<path d="M951,446.3 L993,440.8" stroke="#6c7068" stroke-width="1.4"/>
<path d="M951,449.0 L993,443.5" stroke="#20231e" stroke-width="2.2"/>
<path d="M951,451.3 L993,445.8" stroke="#6c7068" stroke-width="1.4"/>
<path d="M951,454.0 L993,448.5" stroke="#20231e" stroke-width="2.2"/>
<path d="M951,456.3 L993,450.8" stroke="#6c7068" stroke-width="1.4"/>
<path d="M951,459.0 L993,453.5" stroke="#20231e" stroke-width="2.2"/>
<path d="M951,461.3 L993,455.8" stroke="#6c7068" stroke-width="1.4"/>
<path d="M949.500,412 Q947,440 955,466" stroke="#868a80" stroke-width="1.6" fill="none"/>
<path d="M994,407 Q997,432 996,458" stroke="#252823" stroke-width="2.4" fill="none"/>
<path d="M1026,407.5 Q1031,428 1030,450" stroke="#2a2d28" stroke-width="2" fill="none" opacity="0.8"/>
<path d="M871,424.5 Q869,450 874,479.5" stroke="#8b8f85" stroke-width="1.2" fill="none" opacity="0.8"/>
<path d="M877,423.66 Q875,450 880,478.48" stroke="#8b8f85" stroke-width="1.2" fill="none" opacity="0.5"/>
<path d="M884,422.68 Q882,450 887,477.29" stroke="#8b8f85" stroke-width="1.2" fill="none" opacity="0.7"/>
<path d="M891,421.7 Q889,450 894,476.1" stroke="#8b8f85" stroke-width="1.2" fill="none" opacity="0.8"/>
<path d="M897,420.86 Q895,450 900,475.08" stroke="#8b8f85" stroke-width="1.2" fill="none" opacity="0.9"/>
<path d="M903,420.02 Q901,450 906,474.06" stroke="#8b8f85" stroke-width="1.2" fill="none" opacity="0.5"/>
<path d="M915,418.34 Q913,450 918,472.02" stroke="#8b8f85" stroke-width="1.2" fill="none" opacity="0.6"/>
<path d="M750,412 L776,394 L810,380 L814,386 L818,394 L826,420 L830,430 L837,460 L838.5,482 L838.5,510 L835,538 L770,528.5 L766,520 L756,450 Z" fill="url(#gPin)"/>
<g clip-path="url(#cPin)">
<path d="M750,386 Q795,387 842,398" stroke="#23251e" stroke-width="6" fill="none"/>
<path d="M750,392 Q795,393 842,404" stroke="#8d9184" stroke-width="2.2" fill="none"/>
<path d="M750,399 Q795,400 842,411" stroke="#5f6238" stroke-width="6" fill="none" opacity="0.7"/>
<path d="M750,403 Q795,408.5 842,424" stroke="#23251e" stroke-width="6" fill="none"/>
<path d="M750,409 Q795,414.5 842,430" stroke="#8d9184" stroke-width="2.2" fill="none"/>
<path d="M750,416 Q795,421.5 842,437" stroke="#5f6238" stroke-width="6" fill="none" opacity="0.7"/>
<path d="M750,420 Q795,431 842,452" stroke="#23251e" stroke-width="6" fill="none"/>
<path d="M750,426 Q795,437 842,458" stroke="#8d9184" stroke-width="2.2" fill="none"/>
<path d="M750,433 Q795,444 842,465" stroke="#5f6238" stroke-width="6" fill="none" opacity="0.7"/>
<path d="M750,441 Q795,458.5 842,486" stroke="#23251e" stroke-width="6" fill="none"/>
<path d="M750,447 Q795,464.5 842,492" stroke="#8d9184" stroke-width="2.2" fill="none"/>
<path d="M750,454 Q795,471.5 842,499" stroke="#5f6238" stroke-width="6" fill="none" opacity="0.7"/>
<path d="M750,466 Q795,486 842,516" stroke="#23251e" stroke-width="6" fill="none"/>
<path d="M750,472 Q795,492 842,522" stroke="#8d9184" stroke-width="2.2" fill="none"/>
<path d="M750,479 Q795,499 842,529" stroke="#5f6238" stroke-width="6" fill="none" opacity="0.7"/>
<path d="M750,492 Q795,511 842,540" stroke="#23251e" stroke-width="6" fill="none"/>
<path d="M750,498 Q795,517 842,546" stroke="#8d9184" stroke-width="2.2" fill="none"/>
<path d="M750,505 Q795,524 842,553" stroke="#5f6238" stroke-width="6" fill="none" opacity="0.7"/>
<path d="M750,514 Q795,532 842,560" stroke="#23251e" stroke-width="6" fill="none"/>
<path d="M750,520 Q795,538 842,566" stroke="#8d9184" stroke-width="2.2" fill="none"/>
<path d="M750,527 Q795,545 842,573" stroke="#5f6238" stroke-width="6" fill="none" opacity="0.7"/>
<path d="M810,380 L818,394 L826,420 L830,430 L837,460 L838.500,482" stroke="#2a2c25" stroke-width="3" fill="none"/>
</g>
<path d="M750.500,412 L756.500,450 L766.500,520 L770,528" stroke="#a5a89e" stroke-width="1.6" fill="none"/>
<path d="M770,528.500 L835,538" stroke="#8a8d80" stroke-width="1.4" fill="none"/>
<ellipse cx="995" cy="586.500" rx="45.500" ry="31.500" fill="#8a8a88"/>
<ellipse cx="995" cy="580" rx="45.500" ry="31" fill="url(#gNut)"/>
<ellipse cx="995" cy="576.500" rx="32" ry="21.500" fill="#6a6a6c"/>
<ellipse cx="995" cy="576" rx="30" ry="19.500" fill="url(#gNutIn)"/>
<ellipse cx="995.500" cy="580" rx="25.500" ry="15.500" fill="#fff"/>
<path d="M962,590 Q995,612 1030,590" stroke="#c4c4c2" stroke-width="3" fill="none"/>
<rect x="950.3" y="574" width="3.500" height="7" fill="#5e5e60" opacity="0.8"/>
<rect x="1036.3" y="574" width="3.500" height="7" fill="#5e5e60" opacity="0.8"/>
<rect x="959.3" y="600" width="3.500" height="7" fill="#5e5e60" opacity="0.8"/>
<rect x="1028.3" y="600" width="3.500" height="7" fill="#5e5e60" opacity="0.8"/>
<rect x="973.3" y="553" width="3.500" height="7" fill="#5e5e60" opacity="0.8"/>
<rect x="1014.3" y="553" width="3.500" height="7" fill="#5e5e60" opacity="0.8"/>
<path d="M783,567 l-2,8" stroke="#666" stroke-width="0.8"/><circle cx="738" cy="565" r="0.8" fill="#bbb"/>
</g>
</g></svg>
<svg class="abs" id="thumbsvg" style="left:1091px;top:516px" width="124" height="130" viewBox="660.3 247 413.3 433.3"><use href="#gearimg"/></svg>

<div id="taskbar" class="abs"></div>
<svg class="abs" style="left:0;top:860px" width="1440" height="40" viewBox="0 860 1440 40" font-family="'Liberation Sans',sans-serif">
<defs>
<linearGradient id="tbg" x1="0" y1="0" x2="0" y2="1"><stop offset="0" stop-color="#101011"/><stop offset="0.025" stop-color="#1c1d1e"/><stop offset="0.04" stop-color="#4a4c4f"/><stop offset="0.09" stop-color="#222324"/><stop offset="0.5" stop-color="#0c0c0d"/><stop offset="1" stop-color="#050506"/></linearGradient>
<linearGradient id="btn" x1="0" y1="0" x2="0" y2="1"><stop offset="0" stop-color="#5a5b5d"/><stop offset="0.45" stop-color="#3a3b3d"/><stop offset="0.5" stop-color="#232425"/><stop offset="1" stop-color="#1a1b1c"/></linearGradient>
<radialGradient id="orb" cx="0.5" cy="0.4" r="0.6"><stop offset="0" stop-color="#5bb8e8"/><stop offset="0.55" stop-color="#2273b8"/><stop offset="1" stop-color="#0c3566"/></radialGradient>
<radialGradient id="orbglow" cx="0.5" cy="1" r="0.6"><stop offset="0" stop-color="#39c6f0"/><stop offset="1" stop-color="#39c6f0" stop-opacity="0"/></radialGradient>
<linearGradient id="fold" x1="0" y1="0" x2="0" y2="1"><stop offset="0" stop-color="#f4e3a4"/><stop offset="1" stop-color="#e6c66a"/></linearGradient>
<linearGradient id="sky" x1="0" y1="0" x2="0" y2="1"><stop offset="0" stop-color="#35baf0"/><stop offset="1" stop-color="#0a9ee0"/></linearGradient>
<symbol id="sysr" viewBox="0 0 30 34"><path d="M2 2 H21 Q29 3 29 11 Q29 17 22 19 L29 32 H3 Z" fill="#0c0f7c"/><path d="M14 5 H20 Q25 6 25 11 Q25 16 19 17 L25 29 H14 Z" fill="#c8c8c8"/><path d="M14 9 l3.5 -3 l3.5 3 v4 h-7z" fill="#0c0f7c"/><text transform="translate(12.3 30.5) rotate(-90)" font-size="11" font-weight="normal" fill="#e8e8f0" font-family="'Liberation Sans',sans-serif" textLength="27" lengthAdjust="spacingAndGlyphs">SYS</text></symbol>
</defs>
<rect x="0" y="860" width="1440" height="40" fill="url(#tbg)"/>
<path d="M60 861 L220 861 L160 900 L20 900 Z M820 861 L900 861 L840 900 L780 900 Z M1100 861 L1200 861 L1160 900 L1080 900Z" fill="#fff" opacity="0.035"/>
<!-- buttons -->
<g stroke="#77797b" stroke-width="1" fill="url(#btn)">
<rect x="370.5" y="861.5" width="57" height="37.5" rx="3"/>
<rect x="437.500" y="861.5" width="53" height="37.5" rx="3"/>
<rect x="432.5" y="861.5" width="53" height="37.5" rx="3"/>
<rect x="494.5" y="861.5" width="57" height="37.5" rx="3"/>
</g>
<!-- start orb -->
<circle cx="26.7" cy="879.8" r="18.6" fill="#0a2a4e"/>
<circle cx="26.7" cy="879.8" r="17.6" fill="url(#orb)" stroke="#7fb6de" stroke-width="0.8" stroke-opacity="0.7"/>
<ellipse cx="26.7" cy="892" rx="13" ry="6" fill="url(#orbglow)" opacity="0.9"/>
<ellipse cx="26.7" cy="871.5" rx="14" ry="8" fill="#fff" opacity="0.22"/>
<path d="M18.6 871.8 Q22.4 869.6 25.6 872 L24.3 879 Q21 877 17 879 Z" fill="#e8632a"/>
<path d="M27.2 872.6 Q30.8 874.6 35.2 872.2 L33.8 879.4 Q30 881.4 25.9 879.3 Z" fill="#8cc63e"/>
<path d="M16.7 880.4 Q20.4 878.4 24 880.5 L22.6 887.6 Q19.2 885.4 15.4 887.6 Z" fill="#3fa0dc"/>
<path d="M25.5 881 Q29.4 883 33.4 881 L32 888.2 Q28 890.4 24.2 888.2 Z" fill="#f7c63a"/>
<!-- IE -->
<g transform="translate(89.6 879.5)"><circle r="12" fill="none" stroke="#2aa7e6" stroke-width="6.5"/><circle r="12" fill="none" stroke="#5fc8f5" stroke-width="2.5"/><rect x="-13" y="-2.4" width="26" height="5" fill="#2aa7e6"/><path d="M4 3 H16 V9 H4 Z" fill="#0c0c0d"/><path d="M6.5 2.8 L15.5 2.8 L15.2 6.2 L9 8.5 Z" fill="#0c0c0d"/><path d="M-12 5.200 Q-18.500 4.500 -17.500 0 A17.5 6.500 0 0 1 17.500 0 Q17.800 1.500 16.500 2.500" transform="rotate(-38)" fill="none" stroke="#f2c31c" stroke-width="2.300" stroke-linecap="round"/></g>
<!-- Explorer -->
<g><path d="M135.5 869 h13 l2 2.5 h16 v22 h-31 z" fill="url(#fold)" stroke="#c9a64c" stroke-width="0.8"/><rect x="138" y="867.6" width="5" height="3" fill="#3aa845"/><rect x="147" y="869" width="5" height="3" fill="#d9412f"/><rect x="155" y="871" width="5" height="3" fill="#3b7dd8"/><path d="M135.500 877 h31 v16.500 h-31z" fill="#eed27c" stroke="#c9a64c" stroke-width="0.8"/><path d="M140 884 h22 v11 h-5 v-5 h-12 v5 h-5z" fill="#5fb2e6" stroke="#2f86c6" stroke-width="0.8"/><path d="M143 886 h16 v3 h-16z" fill="#bfe3f8"/><circle cx="142" cy="884" r="2" fill="#fff" opacity="0.9"/></g>
<!-- Chrome -->
<g transform="translate(213 880)"><circle r="14.6" fill="#db4437"/><path d="M0 0 L-12.64 -7.3 A14.6 14.6 0 0 0 0 14.6 Z" fill="#0f9d58"/><path d="M0 0 L-12.64 -7.3 A14.6 14.6 0 0 0 -3.5 14.2 L3 3 Z" fill="#0f9d58"/><path d="M0 0 L14.3 -3 A14.6 14.6 0 0 1 -1 14.600 Z" fill="#ffcd40"/><circle r="6.8" fill="#f1f1f1"/><circle r="5.3" fill="#4285f4"/></g>
<!-- Mail -->
<g><path d="M268 868 l16 -2 l5 20 l-16 3z" fill="#7bbf6a"/><path d="M263 871 l22 -1 l2 20 l-22 1z" fill="#f0b04e"/><path d="M262 875 h24 v17 h-24z" fill="#bfe0f6" stroke="#6aa8d8" stroke-width="0.8"/><rect x="279" y="877" width="5" height="4" fill="#c8482e"/><rect x="268" y="883" width="12" height="6" fill="#fff" opacity="0.85"/><path d="M259 892 q14 6 30 -2" stroke="#e9a12c" stroke-width="2.2" fill="none"/></g>
<!-- SYS R -->
<use href="#sysr" x="320" y="863.5" width="31" height="35"/>
<use href="#sysr" x="440.500" y="863.5" width="31" height="35"/>
<!-- Skype -->
<g transform="translate(398.5 880)"><path d="M-9 -13 Q-2 -17 5 -13 Q13 -11 13.500 -3 Q17 4 12 10 Q8 16 0 14 Q-8 17 -12.500 10 Q-16 3 -13 -4 Q-14 -10 -9 -13Z" fill="url(#sky)"/><text x="0" y="7.500" text-anchor="middle" font-size="21" font-weight="bold" fill="#fff">S</text></g>
<!-- Eurotecnica -->
<rect x="506.700" y="863.800" width="32.500" height="32" fill="#fff"/>
<g transform="translate(419.5 840.5) scale(0.41 0.5)"><g transform="translate(0 0)"><path d="M243.3 51.3 L253.500 61 L243.300 67.300 Z" fill="#12a457" stroke="#111" stroke-width="1.500"/><path d="M233.300 60 L243.300 51.300 L243.300 67 Z" fill="#fff" stroke="#111" stroke-width="1.500"/><path d="M236 73.800 L267.500 51.500 L272.500 57.500 L260.800 65.500 L262.300 69 L272.300 63.500 L277 70.500 L267.800 76.500 L269.500 80.200 L283.300 71.800 L288.500 79 L266.500 92 L254.500 75.800 L253 75.600 Z" fill="#111"/><path d="M216.300 90.400 L231 75.300 L242.800 83.300 L242.800 107 Z" fill="#fff" stroke="#111" stroke-width="1.600"/><path d="M243.400 83.500 L254.800 76 L266.500 91 L243.400 106.500 Z" fill="#2aa457" stroke="#111" stroke-width="1.200"/></g></g>
<!-- tray -->
<text x="1199.500" y="882" font-size="11.5" fill="#f2f2f2" textLength="13" lengthAdjust="spacingAndGlyphs">PT</text>
<path d="M1229.500 883.500 L1233.500 879.300 L1237.500 883.500 Z" fill="#f4f4f4"/>
<g fill="#f4f4f4"><rect x="1250.500" y="874" width="1.300" height="14.500"/><path d="M1252.500 875.200 Q1256 873.600 1259 875.600 Q1262 877.400 1265 876 L1263.600 882.600 Q1260.500 884 1258 882.300 Q1255.500 880.500 1252.500 882 Z"/>
<path d="M1275 876.200 L1281.300 875.200 V881 H1275 Z M1282.300 875 L1289.300 874 V881 H1282.300Z M1275 882 H1281.300 V887.600 L1275 886.700 Z M1282.300 882 H1289.300 V888.800 L1282.300 887.800 Z"/>
<path d="M1303 878 h10.500 v8 h-10.500z" fill="none" stroke="#f4f4f4" stroke-width="1.400"/><rect x="1305" y="887" width="7" height="1.400"/><rect x="1299.500" y="874.500" width="4.500" height="5.500"/><path d="M1301.500 880 v6 h2" stroke="#f4f4f4" stroke-width="1.200" fill="none"/>
<path d="M1323 878.500 h2.500 l4 -4 v13 l-4 -4 h-2.500z"/></g>
<circle cx="1333.500" cy="884" r="4.600" fill="#d9261c" stroke="#f7d6d2" stroke-width="0.700"/><path d="M1330.700 881.400 L1336.300 886.600" stroke="#fff" stroke-width="1.500"/>
<text x="1371.700" y="877.200" font-size="11.8" fill="#f6f6f6" textLength="27" lengthAdjust="spacingAndGlyphs">09:25</text>
<text x="1356" y="893.700" font-size="11.8" fill="#f6f6f6" textLength="58" lengthAdjust="spacingAndGlyphs">07/03/2016</text>
<rect x="1425.500" y="861" width="14" height="39" fill="#2a2b2d" stroke="#6d6f72" stroke-width="1"/>
<rect x="1427" y="862.500" width="11" height="18" fill="#4a4b4e" opacity="0.8"/>
</svg>
</body>
</html>
